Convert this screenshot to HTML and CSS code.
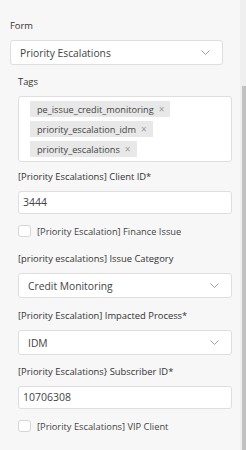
FILE: index.html
```html
<!DOCTYPE html>
<html lang="en">
<head>
  <meta charset="UTF-8" />
  <meta name="viewport" content="width=device-width, initial-scale=1.0"/>
  <title>Form</title>
  <link rel="stylesheet" href="styles.css">
</head>
<body>
  <div class="frame">
    <div class="panel">
      <!-- Form picker -->
      <div class="field form-field">
        <label class="field-label">Form</label>
        <div class="select">
          <span>Priority Escalations</span>
          <svg class="chevron" width="9" height="5" viewBox="0 0 9 5"><path d="M0.5 0.5 L4.5 4.5 L8.5 0.5" fill="none" stroke="#a0a0a0" stroke-width="1"/></svg>
        </div>
      </div>

      <!-- Fields of the selected form -->
      <div class="sub-fields">
        <div class="field tags-field">
          <label class="field-label">Tags</label>
          <div class="tags-box">
            <span class="tag">pe_issue_credit_monitoring<span class="tag-x">&times;</span></span>
            <span class="tag">priority_escalation_idm<span class="tag-x">&times;</span></span>
            <span class="tag">priority_escalations<span class="tag-x">&times;</span></span>
          </div>
        </div>

        <div class="field">
          <label class="field-label">[Priority Escalations] Client ID*</label>
          <div class="text-input">3444</div>
        </div>
        <label class="check">
          <span class="box"></span>[Priority Escalation] Finance Issue
        </label>

        <div class="field select-field">
          <label class="field-label">[priority escalations] Issue Category</label>
          <div class="select">
            <span>Credit Monitoring</span>
            <svg class="chevron" width="9" height="5" viewBox="0 0 9 5"><path d="M0.5 0.5 L4.5 4.5 L8.5 0.5" fill="none" stroke="#a0a0a0" stroke-width="1"/></svg>
          </div>
        </div>

        <div class="field">
          <label class="field-label">[Priority Escalation] Impacted Process*</label>
          <div class="select">
            <span>IDM</span>
            <svg class="chevron" width="9" height="5" viewBox="0 0 9 5"><path d="M0.5 0.5 L4.5 4.5 L8.5 0.5" fill="none" stroke="#a0a0a0" stroke-width="1"/></svg>
          </div>
        </div>

        <div class="field">
          <label class="field-label">[Priority Escalations} Subscriber ID*</label>
          <div class="text-input">10706308</div>
        </div>
        <label class="check">
          <span class="box"></span>[Priority Escalations] VIP Client
        </label>
      </div>
    </div>

    <!-- Scrollbar -->
    <div class="scrollbar">
      <div class="thumb"></div>
    </div>
  </div>
</body>
</html>
```

FILE: styles.css
```css
body {
  margin: 0;
  font-family: "Open Sans", sans-serif;
  color: #333;
  background-color: #f7f7f7;
}
.frame {
  display: flex;
  height: 450px;
  overflow: hidden;
}
.panel {
  flex: 1;
  padding: 19px 0 0 10px;
}
/* Fields */
.field-label {
  display: block;
  font-size: 9.4px;
  line-height: 14px;
  margin-bottom: 7px;
  color: #333;
}
.form-field {
  width: 213px;
  margin-bottom: 15px;
}
.sub-fields {
  width: 214px;
  margin-left: 8px;
}
.field {
  margin-bottom: 10px;
}
.tags-field {
  margin-bottom: 8px;
}
.select-field {
  margin-bottom: 11px;
}
.select {
  display: flex;
  align-items: center;
  justify-content: space-between;
  box-sizing: border-box;
  height: 25px;
  padding: 0 12px 0 9px;
  background-color: #fff;
  border: 1px solid #dedede;
  border-radius: 3px;
  font-size: 10.3px;
  color: #444;
}
.text-input {
  box-sizing: border-box;
  height: 23px;
  line-height: 21px;
  padding: 0 4px;
  background-color: #fff;
  border: 1px solid #dedede;
  border-radius: 3px;
  font-size: 10.5px;
  color: #444;
}
/* Tags */
.tags-box {
  display: flex;
  flex-wrap: wrap;
  gap: 4px;
  padding: 4px 11px 4px;
  background-color: #fff;
  border: 1px solid #dedede;
  border-radius: 3px;
}
.tag {
  display: inline-flex;
  align-items: center;
  height: 16px;
  padding: 0 6px 0 7px;
  background-color: #e8e8e8;
  font-size: 9.2px;
  color: #444;
}
.tag-x {
  color: #9a9a9a;
  font-size: 10px;
  margin-left: 5px;
}
/* Checkboxes */
.check {
  display: flex;
  align-items: center;
  gap: 6px;
  height: 14px;
  font-size: 9.3px;
  color: #444;
  margin: 0 0 14px;
}
.box {
  box-sizing: border-box;
  width: 13px;
  height: 12px;
  border: 1px solid #d6d6d6;
  border-radius: 3px;
  background-color: #fff;
}
/* Scrollbar */
.scrollbar {
  width: 6px;
  background-color: #efefef;
  display: flex;
  justify-content: flex-end;
}
.thumb {
  width: 4px;
  height: 364px;
  margin-top: 86px;
  background-color: #c1c1c1;
}
```
